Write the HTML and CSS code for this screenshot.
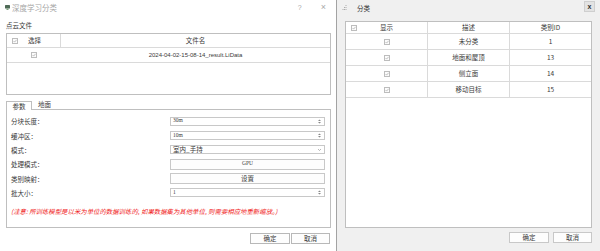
FILE: index.html
```html
<!DOCTYPE html>
<html lang="zh-CN">

<head>
    <meta charset="UTF-8">
    <meta name="viewport" content="width=device-width, initial-scale=1.0">
    <title>深度学习分类</title>
    <link rel="stylesheet" href="styles.css">
</head>

<body>
    <div class="screen">
        <!-- 左侧：深度学习分类对话框 -->
        <section class="dialog">
            <header class="titlebar">
                <svg class="app-icon" width="5" height="5" viewBox="0 0 5 5">
                    <rect x="0" y="0" width="5" height="3.5" rx="0.6" fill="#4f6b57" />
                    <rect x="1.5" y="3.5" width="2" height="1.5" fill="#7fa27f" />
                </svg>
                <span class="title">深度学习分类</span>
                <span class="help">?</span>
                <span class="close">×</span>
            </header>

            <div class="dialog-body">
                <div class="group-label">点云文件</div>

                <div class="file-table">
                    <div class="ft-head">
                        <div class="ft-check">
                            <svg class="check" width="6" height="6" viewBox="0 0 6 6"><rect x="0.5" y="0.5" width="5" height="5" fill="#fcfcfc" stroke="#bdbdbd" /><path d="M1.5 3L2.6 4.1L4.6 1.8" fill="none" stroke="#9a9a9a" stroke-width="0.6" /></svg>
                            <span class="ft-select">选择</span>
                        </div>
                        <div class="ft-name">文件名</div>
                    </div>
                    <div class="ft-row">
                        <div class="ft-check centered">
                            <svg class="check" width="6" height="6" viewBox="0 0 6 6"><rect x="0.5" y="0.5" width="5" height="5" fill="#fcfcfc" stroke="#bdbdbd" /><path d="M1.5 3L2.6 4.1L4.6 1.8" fill="none" stroke="#9a9a9a" stroke-width="0.6" /></svg>
                        </div>
                        <div class="ft-name">2024-04-02-15-08-14_result.LiData</div>
                    </div>
                </div>

                <div class="tabs">
                    <span class="tab active">参数</span>
                    <span class="tab">地面</span>
                </div>

                <div class="tab-pane">
                    <div class="form-grid">
                        <div class="form-row">
                            <label>分块长度：</label>
                            <div class="field spin"><span class="value">30m</span>
                                <svg class="spin-arrows" width="3" height="5" viewBox="0 0 3 5"><path d="M0 2L1.5 0.5L3 2Z M0 3L1.5 4.5L3 3Z" fill="#888" /></svg>
                            </div>
                        </div>
                        <div class="form-row">
                            <label>缓冲区：</label>
                            <div class="field spin"><span class="value">10m</span>
                                <svg class="spin-arrows" width="3" height="5" viewBox="0 0 3 5"><path d="M0 2L1.5 0.5L3 2Z M0 3L1.5 4.5L3 3Z" fill="#888" /></svg>
                            </div>
                        </div>
                        <div class="form-row">
                            <label>模式：</label>
                            <div class="field combo"><span class="value cjk">室内_手持</span>
                                <svg class="combo-arrow" width="3" height="2" viewBox="0 0 3 2"><path d="M0 0L1.5 1.5L3 0" fill="none" stroke="#888" stroke-width="0.6" /></svg>
                            </div>
                        </div>
                        <div class="form-row">
                            <label>处理模式：</label>
                            <button class="push">GPU</button>
                        </div>
                        <div class="form-row">
                            <label>类别映射：</label>
                            <button class="push cjk">设置</button>
                        </div>
                        <div class="form-row">
                            <label>批大小：</label>
                            <div class="field spin"><span class="value">1</span>
                                <svg class="spin-arrows" width="3" height="5" viewBox="0 0 3 5"><path d="M0 2L1.5 0.5L3 2Z M0 3L1.5 4.5L3 3Z" fill="#888" /></svg>
                            </div>
                        </div>
                    </div>
                    <p class="note">(注意: 所训练模型是以米为单位的数据训练的, 如果数据集为其他单位, 则需要相应地重新缩放。)</p>
                </div>

                <div class="actions">
                    <button class="btn">确定</button>
                    <button class="btn">取消</button>
                </div>
            </div>
        </section>

        <!-- 右侧：分类面板 -->
        <section class="panel">
            <header class="panel-bar">
                <svg class="grip" width="5" height="5" viewBox="0 0 5 5" fill="#aaa">
                    <rect x="3.5" y="0" width="1" height="1" />
                    <rect x="2" y="2" width="1" height="1" />
                    <rect x="3.5" y="2" width="1" height="1" />
                    <rect x="0.5" y="4" width="1" height="1" />
                    <rect x="2" y="4" width="1" height="1" />
                    <rect x="3.5" y="4" width="1" height="1" />
                </svg>
                <span class="panel-title">分类</span>
                <span class="panel-close">x</span>
            </header>

            <div class="panel-body">
                <div class="class-table">
                    <div class="ct-head">
                        <div class="ct-cell ct-show">
                            <svg class="check head-check" width="6" height="6" viewBox="0 0 6 6"><rect x="0.5" y="0.5" width="5" height="5" fill="#fcfcfc" stroke="#bdbdbd" /><path d="M1.5 3L2.6 4.1L4.6 1.8" fill="none" stroke="#9a9a9a" stroke-width="0.6" /></svg>
                            显示
                        </div>
                        <div class="ct-cell">描述</div>
                        <div class="ct-cell">类别ID</div>
                    </div>
                    <div class="ct-row">
                        <div class="ct-cell"><svg class="check" width="6" height="6" viewBox="0 0 6 6"><rect x="0.5" y="0.5" width="5" height="5" fill="#fcfcfc" stroke="#bdbdbd" /><path d="M1.5 3L2.6 4.1L4.6 1.8" fill="none" stroke="#9a9a9a" stroke-width="0.6" /></svg></div>
                        <div class="ct-cell">未分类</div>
                        <div class="ct-cell">1</div>
                    </div>
                    <div class="ct-row">
                        <div class="ct-cell"><svg class="check" width="6" height="6" viewBox="0 0 6 6"><rect x="0.5" y="0.5" width="5" height="5" fill="#fcfcfc" stroke="#bdbdbd" /><path d="M1.5 3L2.6 4.1L4.6 1.8" fill="none" stroke="#9a9a9a" stroke-width="0.6" /></svg></div>
                        <div class="ct-cell">地面和屋顶</div>
                        <div class="ct-cell">13</div>
                    </div>
                    <div class="ct-row">
                        <div class="ct-cell"><svg class="check" width="6" height="6" viewBox="0 0 6 6"><rect x="0.5" y="0.5" width="5" height="5" fill="#fcfcfc" stroke="#bdbdbd" /><path d="M1.5 3L2.6 4.1L4.6 1.8" fill="none" stroke="#9a9a9a" stroke-width="0.6" /></svg></div>
                        <div class="ct-cell">侧立面</div>
                        <div class="ct-cell">14</div>
                    </div>
                    <div class="ct-row">
                        <div class="ct-cell"><svg class="check" width="6" height="6" viewBox="0 0 6 6"><rect x="0.5" y="0.5" width="5" height="5" fill="#fcfcfc" stroke="#bdbdbd" /><path d="M1.5 3L2.6 4.1L4.6 1.8" fill="none" stroke="#9a9a9a" stroke-width="0.6" /></svg></div>
                        <div class="ct-cell">移动目标</div>
                        <div class="ct-cell">15</div>
                    </div>
                </div>

                <div class="actions panel-actions">
                    <button class="btn">确定</button>
                    <button class="btn">取消</button>
                </div>
            </div>
        </section>
    </div>
</body>

</html>
```

FILE: styles.css
```css
:root {
    --text-color: #3a3a3a;
    --grid-color: #dadada;
    --border-color: #bfbfbf;
    --panel-bg: #f0f0f0;
    --cjk: "Noto Sans CJK SC", "Liberation Sans", sans-serif;
}

* {
    box-sizing: border-box;
}

body {
    margin: 0;
    width: 600px;
    height: 251px;
    overflow: hidden;
    color: var(--text-color);
    font-family: var(--cjk);
    font-size: 6.5px;
    line-height: 1;
}

button {
    font: inherit;
    color: inherit;
    margin: 0;
    padding: 0;
}

.screen {
    display: flex;
    height: 100%;
}

/* ---------- 左侧对话框 ---------- */
.dialog {
    width: 337px;
    height: 100%;
    background: #ffffff;
    border-right: 1px solid #a3a3a3;
    display: flex;
    flex-direction: column;
}

.titlebar {
    height: 15px;
    display: flex;
    align-items: center;
    padding: 0 10px 0 5px;
}

.app-icon {
    margin-right: 2px;
}

.title {
    font-size: 7.5px;
    color: #a6a6a6;
    flex: 1;
}

.help,
.close {
    color: #a8a8a8;
    font-family: "Liberation Sans", sans-serif;
    font-size: 7px;
}

.help {
    margin-right: 19px;
}

.close {
    font-size: 9px;
}

.dialog-body {
    padding: 0 5px 0 6px;
    display: flex;
    flex-direction: column;
}

.group-label {
    height: 18px;
    display: flex;
    align-items: center;
    padding-top: 2px;
}

.file-table {
    height: 62px;
    border: 1px solid var(--border-color);
}

.ft-head,
.ft-row {
    display: flex;
    border-bottom: 1px solid var(--grid-color);
}

.ft-head {
    height: 14px;
}

.ft-row {
    height: 15px;
}

.ft-check {
    width: 54px;
    display: flex;
    align-items: center;
    padding-left: 5px;
    border-right: 1px solid var(--grid-color);
}

.ft-check.centered {
    justify-content: center;
    padding-left: 0;
}

.ft-select {
    margin-left: 10px;
}

.ft-name {
    flex: 1;
    display: flex;
    align-items: center;
    justify-content: center;
}

.ft-row .ft-name {
    font-family: "Liberation Sans", sans-serif;
    font-size: 6px;
}

.ft-row .ft-check {
    border-right: none;
}

.check {
    display: block;
    flex: none;
}

/* 选项卡 */
.tabs {
    margin-top: 5px;
    height: 9px;
    display: flex;
    align-items: stretch;
}

.tab {
    display: flex;
    align-items: center;
    justify-content: center;
    padding: 0 6px;
    white-space: nowrap;
}

.tab.active {
    width: 26px;
    padding: 0;
    border: 1px solid var(--border-color);
    border-bottom: none;
    background: #ffffff;
    position: relative;
    top: 1px;
}

.tab-pane {
    height: 119px;
    border: 1px solid var(--border-color);
    padding: 4px 5px 0 4px;
}

.form-row {
    height: 14.3px;
    display: grid;
    grid-template-columns: 159px 155px;
    align-items: center;
}

.form-row label {
    padding-top: 1px;
}

.field {
    height: 9px;
    border: 1px solid #c8c8c8;
    background: #ffffff;
    display: flex;
    align-items: center;
    justify-content: space-between;
    padding: 0 3px 0 2px;
}

.combo {
    height: 9.5px;
}

.value {
    font-family: "Liberation Serif", serif;
    font-size: 5.5px;
}

.value.cjk {
    font-family: var(--cjk);
    font-size: 6.5px;
}

.spin-arrows,
.combo-arrow {
    flex: none;
}

.push {
    height: 11px;
    border: 1px solid #c8c8c8;
    background: #fdfdfd;
    font-family: "Liberation Serif", serif;
    font-size: 5.5px;
}

.push.cjk {
    font-family: var(--cjk);
    font-size: 6.5px;
}

.note {
    margin: 9px 0 0;
    color: #f02020;
    font-style: italic;
    font-size: 6.4px;
}

.actions {
    display: flex;
    justify-content: flex-end;
    margin-top: 5px;
    padding-right: 1px;
}

.btn {
    width: 40px;
    height: 11px;
    border: 1px solid #b8b8b8;
    background: #fdfdfd;
}

.btn + .btn {
    width: 39px;
    margin-left: 1px;
}

/* ---------- 右侧分类面板 ---------- */
.panel {
    flex: 1;
    height: 100%;
    background: var(--panel-bg);
    display: flex;
    flex-direction: column;
}

.panel-bar {
    height: 21px;
    display: flex;
    align-items: center;
    padding: 0 5px 0 5px;
}

.grip {
    margin-top: -6px;
}

.panel-title {
    flex: 1;
    margin-left: 10px;
    margin-top: -4px;
    color: #333333;
}

.panel-close {
    width: 11px;
    height: 11px;
    margin-top: -8px;
    background: #e3e3e3;
    border: 1px solid #cfcfcf;
    display: flex;
    align-items: center;
    justify-content: center;
    font-family: "Liberation Sans", sans-serif;
    font-weight: bold;
    font-size: 7px;
    color: #333333;
}

.panel-body {
    padding: 0 8px;
    display: flex;
    flex-direction: column;
}

.class-table {
    height: 207px;
    background: #ffffff;
    border: 1px solid var(--border-color);
}

.ct-head,
.ct-row {
    display: grid;
    grid-template-columns: 82px 82px 81px;
    border-bottom: 1px solid var(--grid-color);
}

.ct-head {
    height: 12px;
}

.ct-row {
    height: 16px;
}

.ct-cell {
    display: flex;
    align-items: center;
    justify-content: center;
    border-right: 1px solid var(--grid-color);
}

.ct-cell:last-child {
    border-right: none;
}

.ct-show {
    position: relative;
}

.head-check {
    position: absolute;
    left: 5px;
    top: 3px;
}

.panel-actions {
    margin-top: 4px;
    padding-right: 0;
}

.panel-actions .btn {
    width: 40px;
    border-color: #c8c8c8;
}

.panel-actions .btn + .btn {
    width: 39px;
    margin-left: 4px;
}
```
